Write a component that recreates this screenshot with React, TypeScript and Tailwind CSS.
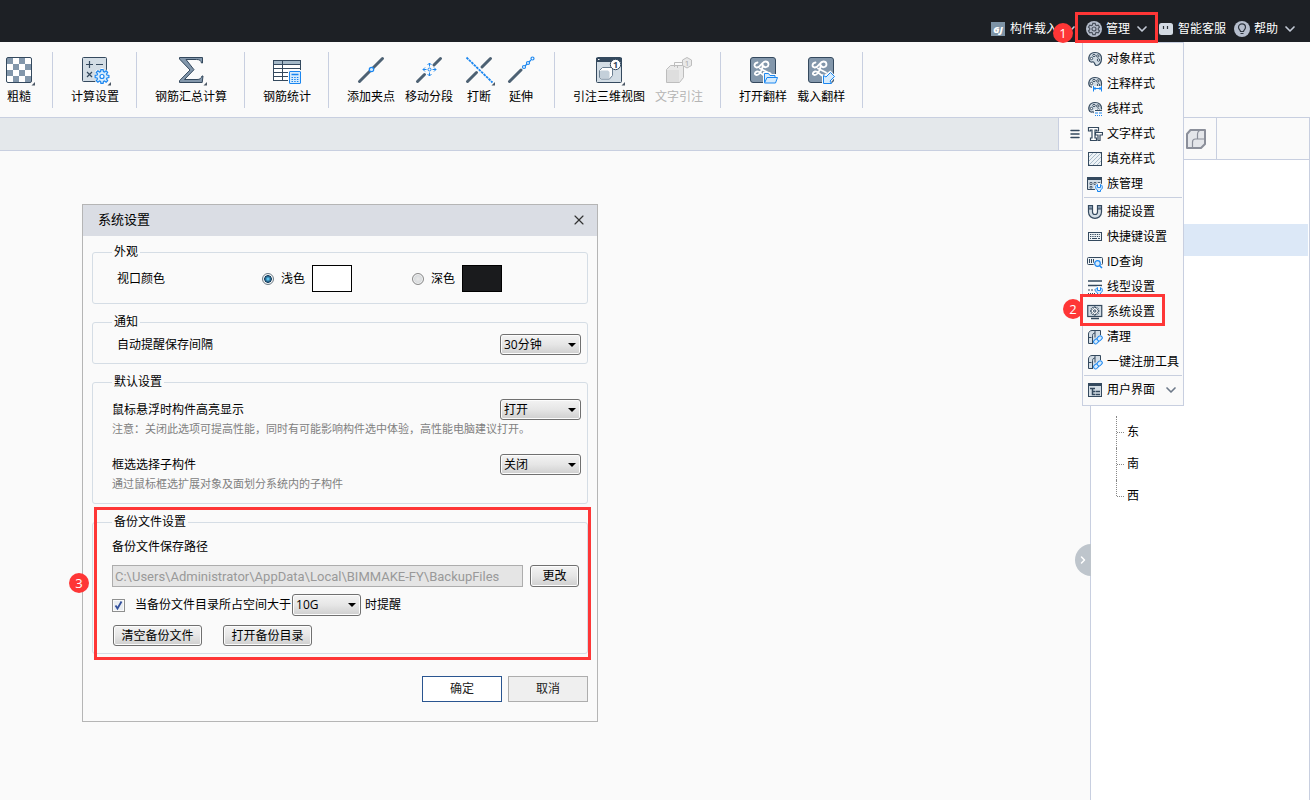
import { useState } from "react";
import type { ReactNode } from "react";
import { ChevronDown, ChevronRight, Menu, X } from "lucide-react";

const DARK = "#34495e";
const STEEL = "#8397ab";
const PALE = "#d3dde5";
const BLUE = "#1a86f0";
const SKY = "#d6ebfc";

// closed outline of a cog with n teeth
function gear(cx: number, cy: number, r: number, n = 8) {
  const pts: string[] = [];
  const step = (Math.PI * 2) / n;
  for (let i = 0; i < n; i++) {
    const a = i * step - Math.PI / 2;
    [[-0.36, 0.74], [-0.2, 1], [0.2, 1], [0.36, 0.74]].forEach(([o, k]) => {
      pts.push(`${(cx + Math.cos(a + o * step) * r * k).toFixed(2)} ${(cy + Math.sin(a + o * step) * r * k).toFixed(2)}`);
    });
  }
  return `M${pts.join("L")}Z`;
}

function ToolSvg({ corner, children }: { corner?: boolean; children: ReactNode }) {
  return (
    <svg width="32" height="30" viewBox="0 0 32 30" fill="none" aria-hidden="true">
      {children}
      {corner && <path d="M32 26v3.5h-3.5z" fill="#4c5866" />}
    </svg>
  );
}

const curl = (
  <path
    d="M10.5 6.5C7 7 6.500 11 9.500 11.500c4 .5 5-6 9-6 3.500 0 4 4.500 1 5.500-1.500.5-2.500 0-3-1M15.500 7c1 4-2 12-6 12-2.500-.3-2-3 .5-3.500 2.500-.5 4 2 7 4M13 12.500l8 4"
    stroke="#fff"
    strokeWidth="1.800"
    strokeLinecap="round"
  />
);

const toolIcons = {
  rough: (
    <ToolSvg corner>
      <rect x="3.5" y="1.5" width="25" height="25" rx="1.5" fill="#fff" />
      {[0, 1, 2, 3].map((r) =>
        [0, 1, 2, 3].map((c) =>
          (r + c) % 2 === 0 ? <rect key={`${r}${c}`} x={4 + c * 6} y={2 + r * 6} width="6" height="6" fill={STEEL} /> : null
        )
      )}
      <rect x="3.5" y="1.5" width="25" height="25" rx="1.5" stroke={DARK} />
    </ToolSvg>
  ),
  calcSettings: (
    <ToolSvg corner>
      <rect x="3.5" y="1.5" width="24" height="24" rx="1" fill={PALE} stroke={DARK} />
      <path d="M7 8.5h7M10.5 5v7M17 8.5h7M8 16l5 5M13 16l-5 5" stroke={DARK} strokeWidth="1.2" />
      <path d={gear(23, 20.5, 8.5)} fill="#fafafa" />
      <path d={gear(23, 20.5, 7)} fill={SKY} stroke={BLUE} strokeWidth="1.2" />
      <circle cx="23" cy="20.5" r="2" fill="#fff" stroke={BLUE} strokeWidth="1.2" />
    </ToolSvg>
  ),
  sigma: (
    <ToolSvg corner>
      <path
        d="M4.5 1.5h23V7h-1c-.6-2.600-2-3.500-5-3.500H11l8 10.200L9.500 23.500H22c3 0 4-1 5-3.500h1l-.8 6.500H4.500v-1.800L15 14 4.500 3z"
        fill={STEEL}
        stroke={DARK}
      />
    </ToolSvg>
  ),
  table: (
    <ToolSvg>
      <rect x="2.5" y="4.5" width="27" height="20" fill="#fff" stroke={DARK} />
      <path d="M3 5h26v3H3z" fill="#a5b9c8" />
      <path d="M2.5 8.5h27M2.5 12.5h27M2.5 16.5h27M2.5 20.5h27M11.5 4.5v20" stroke={DARK} />
      <rect x="17" y="14" width="14" height="15" fill="#fafafa" />
      <rect x="18.5" y="15.5" width="11" height="12" rx=".5" fill={SKY} stroke={BLUE} />
      <path d="M20.5 18.5h7" stroke={BLUE} strokeWidth="1.5" />
      <path d="M20.5 21.5h7M20.5 23.5h7M20.5 25.5h7" stroke={BLUE} strokeDasharray="1.5 1.2" />
    </ToolSvg>
  ),
  addGrip: (
    <ToolSvg>
      <path d="M4.5 25.5l23-23" stroke="#4d6173" strokeWidth="3" strokeLinecap="round" />
      <circle cx="16.5" cy="13.5" r="2.2" fill={SKY} stroke={BLUE} strokeWidth="1.2" />
    </ToolSvg>
  ),
  moveSegment: (
    <ToolSvg>
      <path d="M4.5 25.5l7-7M21 9l6.5-6.5" stroke="#4d6173" strokeWidth="3" strokeLinecap="round" />
      <circle cx="16.5" cy="13.5" r="1.5" stroke={BLUE} />
      <path
        d="M14.5 9l2-2 2 2M14.5 18l2 2 2-2M12 11.5l-2 2 2 2M21 11.5l2 2-2 2M16.5 7v3.5M16.5 16.5V20M10 13.5h3.5M19.5 13.5H23"
        stroke={BLUE}
      />
    </ToolSvg>
  ),
  cut: (
    <ToolSvg corner>
      <path d="M4.5 25.5l9-9M19 11l8.5-8.5" stroke="#4d6173" strokeWidth="3" strokeLinecap="round" />
      <path d="M3.5 1.5l26 25" stroke={BLUE} strokeWidth="1.8" strokeDasharray="2.6 .8" />
    </ToolSvg>
  ),
  extend: (
    <ToolSvg>
      <path d="M4.5 25.5L16 14" stroke="#4d6173" strokeWidth="3" strokeLinecap="round" />
      <g stroke={BLUE} strokeWidth="1.2">
        <circle cx="19" cy="11" r="1.5" />
        <circle cx="23" cy="7" r="1.5" />
        <circle cx="27.5" cy="2.5" r="1.5" />
        <path d="M20 10l2-2M24 6l2-2" />
      </g>
    </ToolSvg>
  ),
  view3d: (
    <ToolSvg corner>
      <rect x="3.5" y="1.5" width="25" height="25" rx="1" fill={PALE} stroke={DARK} />
      <path d="M3 2h26v4H3z" fill={DARK} />
      <path d="M5 3.5h1.5" stroke="#fff" />
      <path d="M6.5 14.5l3-3h9l1 1v7l-3 3.5h-8l-2-1.5z" fill="#fff" stroke="#6b7f91" />
      <path d="M7 15l1-.5h7l1.5 1.5v6.5H8.500L7 21.500z" fill="#c4d0da" />
      <circle cx="22.5" cy="8.5" r="5.2" fill="#fff" stroke={DARK} />
      <text x="22.5" y="12" textAnchor="middle" fontSize="9" fontWeight="700" fill={DARK}>1</text>
    </ToolSvg>
  ),
  textNote: (
    <ToolSvg>
      <g stroke="#bdbdbd" fill="#e9e9e9">
        <path d="M3.5 13.5l4-4h13v12l-4 5h-13z" strokeLinejoin="round" />
        <path d="M4 14h12v12H4z" fill="#dedede" stroke="none" />
        <path d="M11.5 11V6.5h8M14.500 12V9" fill="none" />
        <path d="M24 1.500l4.5 2.500v5.500L24 12l-4.5-2.500V4z" />
      </g>
      <text x="24" y="10" textAnchor="middle" fontSize="8" fill="#a8a8a8">1</text>
    </ToolSvg>
  ),
  openSample: (
    <ToolSvg>
      <rect x="3.5" y="1.5" width="25" height="25" rx="2.5" fill={STEEL} stroke={DARK} />
      {curl}
      <path d="M16 16h7l2 2h5l-1 3h2l-2 8H16z" fill="#fafafa" />
      <path d="M17.5 26.5v-9h4l1.5 2h5v2" fill={SKY} stroke={BLUE} />
      <path d="M17.5 27l2.5-5.5h10.5L28.5 27z" fill={SKY} stroke={BLUE} strokeLinejoin="round" />
    </ToolSvg>
  ),
  loadSample: (
    <ToolSvg>
      <rect x="3.5" y="1.5" width="25" height="25" rx="2.5" fill={STEEL} stroke={DARK} />
      {curl}
      <path d="M17 18l2 1 6.5-4.5 5.500 6-5 5.500 2 3H17z" fill="#fafafa" />
      <path d="M18.5 19.5l2.5 1.5 4.5-4.5 4 4L25 25l1.5 2.500h-8z" fill={SKY} stroke={BLUE} strokeLinejoin="round" />
    </ToolSvg>
  ),
};

type ToolIcon = keyof typeof toolIcons;
type Tool = { label: string; icon: ToolIcon; disabled?: boolean };

const toolGroups: Tool[][] = [
  [{ label: "粗糙", icon: "rough" }],
  [{ label: "计算设置", icon: "calcSettings" }],
  [{ label: "钢筋汇总计算", icon: "sigma" }],
  [{ label: "钢筋统计", icon: "table" }],
  [
    { label: "添加夹点", icon: "addGrip" },
    { label: "移动分段", icon: "moveSegment" },
    { label: "打断", icon: "cut" },
    { label: "延伸", icon: "extend" },
  ],
  [
    { label: "引注三维视图", icon: "view3d" },
    { label: "文字引注", icon: "textNote", disabled: true },
  ],
  [
    { label: "打开翻样", icon: "openSample" },
    { label: "载入翻样", icon: "loadSample" },
  ],
];

const palette = (
  <>
    <path
      d="M8 1.5c4 0 6.5 2.5 6.5 6.200 0 4.200-2.500 6.800-5 6.800-2 0-1.500-3-3-3.500-1.300-.4-2.500.8-3.500-.5C.500 7.500 2 1.500 8 1.500z"
      fill={PALE}
      stroke={DARK}
      strokeWidth="1.2"
    />
    <g fill="#fff" stroke={DARK}>
      <circle cx="4.5" cy="7.5" r="1.2" />
      <circle cx="7" cy="4.5" r="1.2" />
      <circle cx="10.8" cy="5" r="1.2" />
      <circle cx="11.5" cy="9" r="1.2" />
    </g>
  </>
);

const book = (
  <>
    <path d="M1.5 14.5V5c0-2 1.500-3.500 3.500-3.500h8.5v12l-7 1z" fill={PALE} stroke={DARK} strokeLinejoin="round" />
    <path d="M5.5 14V6.5c0-1.500 1-2.500 2.500-2.500M8 8.500V1.500M1.500 8.500h3" stroke={DARK} />
    <path d="M6 15l1-4 6-5 3 1v6l-4 3H6z" fill="#fafafa" />
    <rect x="6.500" y="10.500" width="5.500" height="4" rx="2" transform="rotate(-45 9 12.5)" fill={SKY} stroke={BLUE} />
    <rect x="10" y="7.500" width="5.500" height="4" rx="2" transform="rotate(-45 12.5 9.5)" fill={SKY} stroke={BLUE} />
  </>
);

const wrench = (
  <>
    <circle cx="12" cy="11.5" r="4.5" fill="#fafafa" />
    <path d="M10.5 8.5c-2.500 1-2.500 4.500 0 5.500v1.500h3V14c2.500-1 2.500-4.500 0-5.500v3h-3z" fill={SKY} stroke={BLUE} />
  </>
);

const menuIcons = {
  object: palette,
  note: (
    <>
      {palette}
      <path d="M5 10h11v6H5z" fill="#fafafa" />
      <path d="M6.5 10v5.500M14.5 10v5.500M6.5 12.5h8M8.5 11L7 12.500 8.500 14M12.500 11l1.500 1.500-1.500 1.500" stroke={BLUE} />
    </>
  ),
  line: (
    <>
      {palette}
      <path d="M7 8.500h9V16H7z" fill="#fafafa" />
      <path d="M8 9.500h7" stroke={DARK} />
      <path d="M8 12h7" stroke={BLUE} strokeDasharray="3 1" />
      <path d="M8 14.500h7" stroke={BLUE} strokeDasharray="1 1" />
    </>
  ),
  text: (
    <>
      <path d="M1.5 1.5h10V5h-2V4H8v8h1.500v2.500h-6V12H5V4H3.500v1h-2z" fill="#fff" stroke={DARK} strokeWidth="1.2" />
      <path d="M8.500 6.500h7v2.500H13v5.500h-2V9H8.500z" fill="#fff" stroke={DARK} strokeWidth="1.2" />
    </>
  ),
  hatch: (
    <>
      <rect x="1.5" y="1.5" width="13" height="13" fill="#eef3f6" />
      <path d="M2 6l4-4M2 10l8-8M2 14L14 2M6 14l8-8M10 14l4-4" stroke="#a9bccb" />
      <rect x="1.5" y="1.5" width="13" height="13" stroke={DARK} />
    </>
  ),
  family: (
    <>
      <path d="M.5 1.5h14v12H.5z" fill={PALE} stroke={DARK} />
      <path d="M0 2.5h15" stroke={DARK} strokeWidth="3" />
      <path d="M3 6.500h2v2H3zM7 6.500h2v2H7zM11 6.500h2v2h-2zM3 10.500h2v1.500H3z" fill="#fff" stroke={DARK} strokeWidth=".8" />
      {wrench}
    </>
  ),
  snap: (
    <>
      <path d="M1.5 1.5h4V8c0 3.300 5 3.300 5 0V1.5h4V8c0 8.500-13 8.500-13 0z" fill={PALE} stroke={DARK} strokeWidth="1.2" />
      <path d="M2 2h3v3H2zM11 2h3v3h-3z" fill={STEEL} />
      <path d="M1.5 5h4M10.5 5h4" stroke={DARK} />
    </>
  ),
  keyboard: (
    <>
      <rect x="1.5" y="3.5" width="13" height="8" fill="#eef3f6" stroke={DARK} />
      <path d="M3 5.5h10M3 7.5h10" stroke={DARK} strokeDasharray="1.3 1" />
      <path d="M3 9.5h1M5 9.5h5M11 9.5h2" stroke={DARK} />
    </>
  ),
  idSearch: (
    <>
      <rect x=".5" y="3.5" width="15" height="7" rx="1" fill="#eef3f6" stroke={DARK} />
      <path d="M2.5 5v4M4.5 5v4M6.5 5v4" stroke={DARK} />
      <circle cx="10.5" cy="9.5" r="4" fill="#fafafa" />
      <circle cx="10.5" cy="9.5" r="2.8" fill={SKY} stroke={BLUE} strokeWidth="1.2" />
      <path d="M12.5 11.5l2.5 2.5" stroke={BLUE} strokeWidth="1.5" />
    </>
  ),
  lineType: (
    <>
      <path d="M1 2h14M1 6.5h14" stroke={DARK} strokeWidth="1.5" />
      <path d="M1 11h7" stroke={DARK} strokeDasharray="2 1" />
      <path d="M1 14.5h7" stroke={DARK} strokeDasharray="1 1" />
      {wrench}
    </>
  ),
  system: (
    <>
      <rect x=".75" y="1.5" width="14" height="11" fill={PALE} stroke={DARK} strokeWidth="1.2" />
      <path d={gear(7.75, 7, 4.2)} fill="#fff" stroke={DARK} />
      <circle cx="7.75" cy="7" r="1.2" fill={PALE} stroke={DARK} />
      <path d="M4 14.5h8" stroke={DARK} strokeWidth="1.5" />
    </>
  ),
  clean: book,
  register: book,
  ui: (
    <>
      <rect x="1.5" y="1.5" width="13" height="13" fill={PALE} stroke={DARK} />
      <path d="M1 2.5h14" stroke={DARK} strokeWidth="3" />
      <path d="M3 6.5h5M5.5 6.5v6H8M5.5 9.5H8M8.5 9.5H13M8.5 12.5H13" stroke={DARK} strokeWidth="1.5" />
    </>
  ),
};

const menuSections: { label: string; icon: keyof typeof menuIcons; step?: number; more?: boolean }[][] = [
  [
    { label: "对象样式", icon: "object" },
    { label: "注释样式", icon: "note" },
    { label: "线样式", icon: "line" },
    { label: "文字样式", icon: "text" },
    { label: "填充样式", icon: "hatch" },
    { label: "族管理", icon: "family" },
  ],
  [
    { label: "捕捉设置", icon: "snap" },
    { label: "快捷键设置", icon: "keyboard" },
    { label: "ID查询", icon: "idSearch" },
    { label: "线型设置", icon: "lineType" },
    { label: "系统设置", icon: "system", step: 2 },
    { label: "清理", icon: "clean" },
    { label: "一键注册工具", icon: "register" },
  ],
  [{ label: "用户界面", icon: "ui", more: true }],
];

// numbered red marker, placed by its parent
function Step({ n, className }: { n: number; className: string }) {
  return (
    <span className={`absolute flex size-5 items-center justify-center rounded-full bg-[#fe3636] text-[13px] leading-5 text-white ${className}`}>
      {n}
    </span>
  );
}

function ManageMenu() {
  return (
    <div className="absolute top-full -left-1 z-20 w-[102px] border border-[#c8cfe0] bg-[#fafafa] py-[3px] text-black">
      {menuSections.map((items, i) => (
        <ul key={i}>
          {i > 0 && <li className="m-px h-px bg-[#c8cfdf]" role="separator" />}
          {items.map((item) => (
            <li key={item.label} className="relative">
              <button className="flex h-[25px] w-full items-center gap-1 pl-1 whitespace-nowrap">
                <svg width="16" height="16" viewBox="0 0 16 16" fill="none" className="shrink-0" aria-hidden="true">
                  {menuIcons[item.icon]}
                </svg>
                {item.label}
                {item.more && <ChevronDown className="ml-1 size-4 shrink-0 text-[#6d7989]" strokeWidth={2.5} />}
              </button>
              {item.step && (
                <>
                  <span className="pointer-events-none absolute -top-[5px] -left-[3px] h-8 w-[85px] border-3 border-[#fe3636]" />
                  <Step n={item.step} className="top-0 -left-5" />
                </>
              )}
            </li>
          ))}
        </ul>
      ))}
    </div>
  );
}

function NavChevron() {
  return <ChevronDown className="-mr-1 size-4 shrink-0 text-[#c3cad6]" strokeWidth={2.5} />;
}

function Header() {
  return (
    <header className="flex h-[42px] items-end justify-end bg-[#1d2025] pr-1 text-white">
      <nav className="flex">
        <button className="flex h-[26px] items-center gap-1 pr-3">
          <svg width="16" height="16" viewBox="0 0 16 16" aria-hidden="true">
            <rect x="1" y="1" width="14" height="14" fill="#7d93a6" />
            <text x="8" y="11.5" textAnchor="middle" fontSize="9" fontWeight="800" fontStyle="italic" fill="#fff">GJ</text>
          </svg>
          构件载入
          <NavChevron />
        </button>
        <div className="relative">
          <button className="flex h-[26px] items-center gap-1 pr-3" aria-expanded="true">
            <svg width="16" height="16" viewBox="0 0 16 16" fill="none" aria-hidden="true">
              <circle cx="8" cy="8" r="8" fill="#b6becd" />
              <path d={gear(8, 8, 5.8, 6)} stroke="#4a525e" strokeWidth="1.2" />
              <circle cx="8" cy="8" r="2" stroke="#4a525e" strokeWidth="1.2" />
            </svg>
            管理
            <NavChevron />
          </button>
          <ManageMenu />
          <span className="pointer-events-none absolute -top-1 right-0 -bottom-px z-30 w-[83px] border-3 border-[#fe3636]" />
          <Step n={1} className="top-[7px] -left-[33px]" />
        </div>
        <button className="flex h-[26px] items-center gap-1 pr-2">
          <svg width="16" height="16" viewBox="0 0 16 16" aria-hidden="true">
            <rect x="1" y="2" width="14" height="12" rx="2.5" fill="#d3dae3" />
            <path d="M5.5 5v3M9.5 5v3" stroke="#2b3138" strokeWidth="1.2" />
          </svg>
          智能客服
        </button>
        <button className="flex h-[26px] items-center gap-1 pr-3">
          <svg width="16" height="16" viewBox="0 0 16 16" fill="none" aria-hidden="true">
            <circle cx="8" cy="8" r="8" fill="#b6becd" />
            <path d="M6.5 10.5c0-1.500-2-2-2-4.200a3.500 3.500 0 017 0c0 2.200-2 2.700-2 4.200zM6.5 12.5h3" stroke="#2f3640" strokeWidth="1.2" />
          </svg>
          帮助
          <NavChevron />
        </button>
      </nav>
    </header>
  );
}

function Toolbar() {
  return (
    <div className="flex h-[76px] border-b border-[#c8cfe0] bg-[#fafafa] pt-[10px]">
      {toolGroups.map((group, i) => (
        <div
          key={i}
          className={`flex h-14 gap-[10px] border-r border-[#c8cfe0] pr-[17px] ${i === 0 ? "pl-[3px]" : "pl-[18px]"}`}
        >
          {group.map((tool) => (
            <button
              key={tool.label}
              disabled={tool.disabled}
              className="flex min-w-8 flex-col items-center pt-1 whitespace-nowrap disabled:text-[#b4b4b4]"
            >
              {toolIcons[tool.icon]}
              <span className="leading-[22px]">{tool.label}</span>
            </button>
          ))}
        </div>
      ))}
    </div>
  );
}

const BTN =
  "rounded-[3px] border border-[#707070] bg-linear-to-b from-[#f3f3f3] via-[#e6e6e6] to-[#cfcfcf] inset-shadow-[0_0_0_1px_#fcfcfc]";

function Select({ id, label, value, options, className }: {
  id: string;
  label?: string;
  value: string;
  options: string[];
  className: string;
}) {
  return (
    <span className={`relative block shrink-0 ${className}`}>
      <select id={id} aria-label={label} defaultValue={value} className={`size-full appearance-none pl-[3px] ${BTN}`}>
        {options.map((o) => (
          <option key={o}>{o}</option>
        ))}
      </select>
      <svg width="8" height="4" viewBox="0 0 8 4" className="pointer-events-none absolute inset-y-0 right-[5px] my-auto" aria-hidden="true">
        <path d="M0 0h8L4 4z" />
      </svg>
    </span>
  );
}

function Group({ title, className, children }: { title: string; className: string; children: ReactNode }) {
  return (
    <fieldset className={`relative rounded-[3px] border border-[#d5dde5] pr-[6px] pl-[19px] ${className}`}>
      <legend className="px-[2px] leading-4">{title}</legend>
      {children}
    </fieldset>
  );
}

const RADIO =
  "mr-[7px] size-3 appearance-none rounded-full border border-[#8a8a8a] bg-radial from-[#e9e9e9] to-[#c9ced2] inset-shadow-[0_0_0_1px_#f4f4f4] checked:border-[#6c7a85] checked:from-[#5cc3ee] checked:from-10% checked:via-[#123b5c] checked:via-50% checked:to-[#f2f4f5] checked:to-60%";

function SettingsDialog() {
  const [theme, setTheme] = useState("light");
  return (
    <section role="dialog" aria-label="系统设置" className="mt-[53px] ml-[82px] w-[516px] border border-[#b5b5b5] bg-[#fafafa]">
      <div className="flex h-[31px] items-center justify-between bg-[#dadde4] pr-[10px] pb-px pl-[15px] text-[13px]">
        <h1>系统设置</h1>
        <button aria-label="关闭">
          <X className="size-4 text-[#333]" strokeWidth={1.75} />
        </button>
      </div>

      <div className="flex flex-col gap-[10px] px-[9px] pt-2">
        <Group title="外观" className="pt-[5px] pb-[11px]">
          <div className="flex h-[27px] items-center pl-[5px]">
            <span className="w-[145px]">视口颜色</span>
            <label className="flex w-[150px] items-center">
              <input type="radio" name="theme" checked={theme === "light"} onChange={() => setTheme("light")} className={RADIO} />
              浅色
              <span className="ml-[7px] h-[27px] w-10 border border-black bg-white" />
            </label>
            <label className="flex items-center">
              <input type="radio" name="theme" checked={theme === "dark"} onChange={() => setTheme("dark")} className={RADIO} />
              深色
              <span className="ml-[7px] h-[27px] w-10 border border-black bg-[#1a1b1d]" />
            </label>
          </div>
        </Group>

        <Group title="通知" className="pt-1 pb-2">
          <div className="flex items-center justify-between pl-[5px]">
            <label htmlFor="interval">自动提醒保存间隔</label>
            <Select id="interval" value="30分钟" options={["10分钟", "30分钟", "60分钟"]} className="h-[21px] w-[81px]" />
          </div>
        </Group>

        <Group title="默认设置" className="pt-[9px] pb-[10px]">
          <div className="flex items-center justify-between">
            <label htmlFor="hover">鼠标悬浮时构件高亮显示</label>
            <Select id="hover" value="打开" options={["打开", "关闭"]} className="h-[21px] w-[81px]" />
          </div>
          <p className="text-[11px] leading-[18px] text-[#808080]">
            注意：关闭此选项可提高性能，同时有可能影响构件选中体验，高性能电脑建议打开。
          </p>
          <div className="mt-4 flex items-center justify-between">
            <label htmlFor="child">框选选择子构件</label>
            <Select id="child" value="关闭" options={["打开", "关闭"]} className="h-[21px] w-[81px]" />
          </div>
          <p className="text-[11px] leading-[18px] text-[#808080]">通过鼠标框选扩展对象及面划分系统内的子构件</p>
        </Group>

        <Group title="备份文件设置" className="pt-2 pb-[7px]">
          <label htmlFor="path" className="block leading-[18px]">备份文件保存路径</label>
          <div className="mt-[9px] flex gap-[7px] pr-[2px]">
            <input
              id="path"
              disabled
              defaultValue="C:\Users\Administrator\AppData\Local\BIMMAKE-FY\BackupFiles"
              className="h-[22px] min-w-0 flex-1 border border-[#adadad] bg-[#e5e5e5] px-[2px] font-['Roboto',sans-serif] text-[13px] text-[#999]"
            />
            <button className={`h-[22px] w-[49px] ${BTN}`}>更改</button>
          </div>
          <div className="mt-[7px] flex h-[22px] items-center">
            <label className="flex items-center">
              <input type="checkbox" defaultChecked className="peer size-[13px] appearance-none border border-[#8e8f8f] bg-[#e9edf2] inset-shadow-[0_0_0_1px_#fafafa]" />
              <svg width="13" height="13" viewBox="0 0 13 13" fill="none" className="pointer-events-none invisible -ml-[13px] peer-checked:visible" aria-hidden="true">
                <path d="M3.5 6.5l2 3 4-7" stroke="#33509c" strokeWidth="1.8" />
              </svg>
              <span className="ml-[10px]">当备份文件目录所占空间大于</span>
            </label>
            <Select id="limit" label="空间上限" value="10G" options={["5G", "10G", "20G"]} className="ml-px h-[22px] w-[69px]" />
            <span className="ml-1">时提醒</span>
          </div>
          <div className="mt-[9px] flex gap-[21px] pl-px">
            <button className={`h-[21px] w-[89px] ${BTN}`}>清空备份文件</button>
            <button className={`h-[21px] w-[89px] ${BTN}`}>打开备份目录</button>
          </div>
          <span className="pointer-events-none absolute -top-[23px] -right-1 -bottom-[7px] left-px border-3 border-[#fe3636]" />
          <Step n={3} className="top-[43px] -left-6" />
        </Group>
      </div>

      <div className="flex justify-end gap-[6px] px-[9px] pt-[22px] pb-[19px] text-[#222]">
        <button className="h-[26px] w-20 border border-[#2a5590] bg-white">确定</button>
        <button className="h-[26px] w-20 border border-[#adadad] bg-[#efefef]">取消</button>
      </div>
    </section>
  );
}

function SidePanel() {
  return (
    <aside className="relative flex w-[220px] shrink-0 flex-col border-x border-[#c8cfe0] bg-white">
      <div className="flex h-[42px] border-b border-[#c8cfe0] bg-[#fafafa]">
        <button aria-label="三维视图" className="flex w-[126px] items-center justify-end border-r border-[#c8cfe0] pr-[9px]">
          <svg width="22" height="22" viewBox="0 0 22 22" fill="none" aria-hidden="true">
            <path d="M5.5 2H20v14l-4 4H2V6z" fill="#e4e6ea" stroke="#8b8f9a" strokeWidth="2" strokeLinejoin="round" />
            <path d="M7.5 20v-6c0-2 1-3 3-3H20M12.500 10.500V6c0-1.500.5-2.500 2-3.500" stroke="#8b8f9a" strokeWidth="1.2" />
          </svg>
        </button>
      </div>
      <div className="mt-16 mr-px h-8 bg-[#dce8f7]" />
      <ul className="mt-[144px] ml-[25px] pt-4">
        {["东", "南", "西"].map((name, i) => (
          <li key={name} className="flex h-8">
            <span className={`w-px border-l border-dotted border-[#888] ${i === 2 ? "h-4" : "h-8"}`} />
            <span className="mt-4 w-[7px] border-t border-dotted border-[#888]" />
            <span className="ml-[3px] leading-8">{name}</span>
          </li>
        ))}
      </ul>
      <button
        aria-label="收起"
        className="absolute top-[426px] -left-4 flex h-8 w-4 items-center justify-center rounded-l-full bg-[#bec5cc] text-white"
      >
        <ChevronRight className="size-3" strokeWidth={3} />
      </button>
    </aside>
  );
}

export default function App() {
  return (
    <div className="flex min-h-screen flex-col bg-[#fafafa] font-['Open_Sans','Noto_Sans_CJK_SC',sans-serif] text-xs text-black">
      <Header />
      <Toolbar />
      <div className="flex flex-1">
        <main className="min-w-0 flex-1">
          <div className="flex h-[33px] justify-end border-b border-[#c8cfe0] bg-[#e4e8eb]">
            <button aria-label="视图列表" className="flex w-8 items-center justify-center border-l border-[#c8cfe0] bg-[#fafafa]">
              <Menu className="size-3 text-[#34495e]" strokeWidth={3} />
            </button>
          </div>
          <SettingsDialog />
        </main>
        <SidePanel />
      </div>
    </div>
  );
}
